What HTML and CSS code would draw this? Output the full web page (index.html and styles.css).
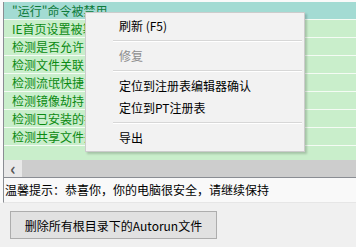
FILE: index.html
```html
<!DOCTYPE html>
<html lang="zh-CN">
<head>
    <meta charset="UTF-8">
    <title>Autorun 检测</title>
    <link rel="stylesheet" href="styles.css">
</head>
<body>
    <div class="panel">
        <div class="list">
            <div class="rows">
                <div class="row selected">"运行"命令被禁用</div>
                <div class="row">IE首页设置被篡改</div>
                <div class="row">检测是否允许自动运行</div>
                <div class="row">检测文件关联</div>
                <div class="row">检测流氓快捷方式</div>
                <div class="row">检测镜像劫持</div>
                <div class="row">检测已安装的插件</div>
                <div class="row">检测共享文件夹</div>
            </div>
            <div class="hscroll">
                <span class="arrow">&lsaquo;</span>
                <span class="thumb"></span>
            </div>
        </div>
        <div class="tip">温馨提示：恭喜你，你的电脑很安全，请继续保持</div>
    </div>
    <div class="footer">
        <button class="btn">删除所有根目录下的Autorun文件</button>
    </div>

    <!-- right-click menu over the list -->
    <div class="menu">
        <div class="item">刷新 (F5)</div>
        <div class="sep"></div>
        <div class="item disabled">修复</div>
        <div class="sep"></div>
        <div class="item">定位到注册表编辑器确认</div>
        <div class="item">定位到PT注册表</div>
        <div class="sep"></div>
        <div class="item">导出</div>
    </div>
</body>
</html>
```

FILE: styles.css
```css
body {
    margin: 0;
    width: 356px;
    height: 247px;
    overflow: hidden;
    background: #f0f0f0;
    font-family: "Noto Sans CJK SC", "Microsoft YaHei", sans-serif;
    font-size: 12px;
    color: #000;
    position: relative;
}
.panel {
    padding: 2px 0 0 3px;
    background: #fafafa;
}
.list {
    border-left: 1px solid #8a8d93;
    border-bottom: 1px solid #8a8d93;
}
.rows {
    height: 158px;
    background: #c9eecb;
    overflow: hidden;
}
.row {
    height: 17px;
    line-height: 17px;
    border-bottom: 1px solid #f4fbf4;
    padding-left: 8px;
    color: #0b8a12;
    white-space: nowrap;
}
.row.selected {
    background: #a3dbd3;
    color: #0d7a3a;
}
.hscroll {
    display: flex;
    height: 17px;
    background: #e8e8e8;
}
.arrow {
    width: 18px;
    text-align: center;
    font-size: 17px;
    line-height: 15px;
    font-weight: bold;
    color: #555;
}
.thumb {
    flex: 1;
    background: #cdcdcd;
}
.tip {
    height: 24px;
    line-height: 23px;
    border-left: 1px solid #8a8d93;
    padding-left: 1px;
    border-bottom: 1px solid #e6e6e6;
    background: #f9f9f9;
    white-space: nowrap;
}
.footer {
    height: 41px;
    padding: 8px 0 0 10px;
    border-bottom: 1px solid #fdfdfd;
}
.btn {
    width: 207px;
    height: 28px;
    background: #e1e1e1;
    border: 1px solid #adadad;
    font-family: inherit;
    font-size: 12px;
    color: #000;
    padding: 0;
}
.menu {
    position: absolute;
    left: 85px;
    top: 12px;
    width: 218px;
    padding: 2px 0;
    background: #f2f2f2;
    border: 1px solid #cccccc;
    box-shadow: 2px 2px 2px rgba(0, 0, 0, 0.18);
}
.item {
    height: 22px;
    line-height: 22px;
    padding-left: 33px;
    white-space: nowrap;
}
.item.disabled {
    color: #8d8d8d;
}
.sep {
    height: 1px;
    margin: 3px 2px 3px 27px;
    background: #d7d7d7;
    border-bottom: 1px solid #fff;
}
```
